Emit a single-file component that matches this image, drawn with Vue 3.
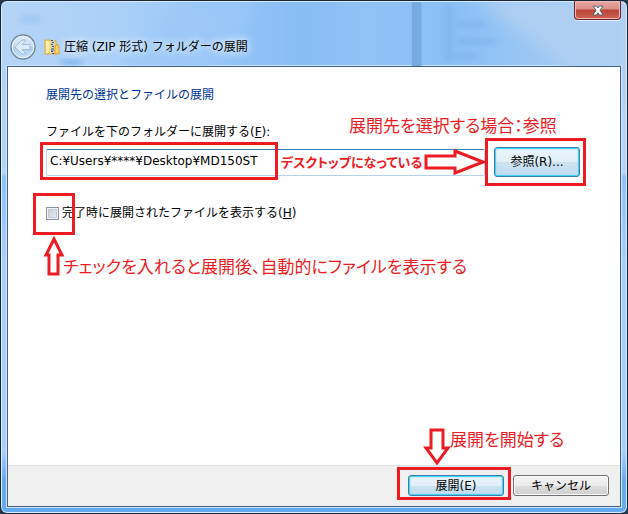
<script setup>
import { ref } from 'vue'

const folder = ref('C:¥Users¥****¥Desktop¥MD150ST')
const showFiles = ref(false)
</script>

<template>
  <div class="window">
    <header class="titlebar">
      <svg class="backdrop" viewBox="0 0 628 66" preserveAspectRatio="none" aria-hidden="true">
        <defs>
          <filter id="soft"><feGaussianBlur stdDeviation="3" /></filter>
          <filter id="softer"><feGaussianBlur stdDeviation="8" /></filter>
        </defs>
        <path d="M110 70L180 0H260L205 70Z" fill="#9dc8f8" opacity=".7" filter="url(#softer)" />
        <path d="M480 -4H640V80H590Z" fill="#afcff2" filter="url(#softer)" />
        <ellipse cx="66" cy="62" rx="12" ry="3" fill="#83b7ec" filter="url(#soft)" />
        <ellipse cx="24" cy="18" rx="12" ry="5" fill="#a2c9f3" filter="url(#soft)" />
        <rect x="414" y="0" width="10" height="66" fill="#75abe1" />
        <g fill="#7db4ea" opacity=".75" filter="url(#soft)">
          <rect x="447" y="2" width="9" height="60" />
          <rect x="460" y="20" width="30" height="6" />
          <rect x="460" y="37" width="40" height="7" />
          <rect x="458" y="53" width="24" height="6" />
        </g>
      </svg>
      <button class="close" type="button" aria-label="閉じる">
        <svg width="12" height="11" viewBox="0 0 12 11">
          <path d="M1 1H4.500L6 3L7.500 1H11L8 5.300L11 10H7.500L6 7.800L4.500 10H1L4 5.300Z" fill="#fff" stroke="#526779" />
        </svg>
      </button>
      <button class="back" type="button" aria-label="戻る">
        <svg width="26" height="26" viewBox="0 0 26 26">
          <defs>
            <linearGradient id="orb" x1="0" y1="0" x2="0" y2="1">
              <stop offset="0" stop-color="#dfecfa" />
              <stop offset=".48" stop-color="#c6dcf2" />
              <stop offset=".5" stop-color="#a9cbec" />
              <stop offset="1" stop-color="#c8e2fb" />
            </linearGradient>
          </defs>
          <circle cx="13" cy="13" r="12" fill="url(#orb)" stroke="#71859b" stroke-width="1.400" />
          <circle cx="13" cy="13" r="10.800" fill="none" stroke="#e8f3fe" />
          <path d="M5 13L12 6H16L12 10.500H20V15.500H12L16 20H12Z" fill="#dcebfa" stroke="#9bb4ce" stroke-width=".8" />
        </svg>
      </button>
      <svg class="zip" width="16" height="16" viewBox="0 0 16 16" aria-hidden="true">
        <path d="M1 1H6L7 2H12V15H1Z" fill="#fbd977" stroke="#e0a94b" />
        <path d="M2 2H5V14H2Z" fill="#ffedaa" />
        <path d="M11 15V8L12 6H14L15 8V15Z" fill="#fbd064" stroke="#d99b38" />
        <path d="M7 1H10V15H7Z" fill="#c9d3d9" />
        <path d="M7 1.500H9M8 3.500H10M7 5.500H9M8 7.500H10M7 12.500H9M8 14.500H10" stroke="#3f5868" />
        <path d="M7 9H10V12H7Z" fill="#7893a3" />
      </svg>
      <h1>圧縮 (ZIP 形式) フォルダーの展開</h1>
    </header>

    <form class="client" @submit.prevent>
      <main>
        <h2>展開先の選択とファイルの展開</h2>
        <label class="caption" for="folder">ファイルを下のフォルダーに展開する(<u>F</u>):</label>
        <div class="picker">
          <input id="folder" v-model="folder" type="text" />
          <button class="btn browse" type="button">参照(R)...</button>
        </div>
        <div class="option">
          <input id="show" v-model="showFiles" type="checkbox" />
          <label for="show">完了時に展開されたファイルを表示する(<u>H</u>)</label>
        </div>
      </main>
      <footer>
        <button class="btn primary" type="submit">展開(E)</button>
        <button class="btn" type="button">キャンセル</button>
      </footer>
    </form>

    <div class="frame frame-path"></div>
    <div class="frame frame-browse"></div>
    <div class="frame frame-check"></div>
    <div class="frame frame-extract"></div>
    <p class="note note-browse">展開先を選択する場合：参照</p>
    <p class="note note-desktop">デスクトップになっている</p>
    <p class="note note-check">チェックを入れると展開後、自動的にファイルを表示する</p>
    <p class="note note-start">展開を開始する</p>
    <svg class="arrow arrow-right" width="62" height="28" viewBox="0 0 62 28" aria-hidden="true">
      <path d="M2 8H31V3L59 14L31 25V20H2Z" />
    </svg>
    <svg class="arrow arrow-up" width="22" height="40" viewBox="0 0 22 40" aria-hidden="true">
      <path d="M11 3L19 19H15V38H6V19H3Z" />
    </svg>
    <svg class="arrow arrow-down" width="28" height="38" viewBox="0 0 28 38" aria-hidden="true">
      <path d="M8 2H20V20H25L14 35L3 20H8Z" />
    </svg>
  </div>
</template>

<style>
body {
  margin: 0;
  background: #26384a;
}
</style>

<style scoped>
.window {
  position: relative;
  box-sizing: border-box;
  min-height: 100vh;
  display: flex;
  flex-direction: column;
  padding: 0 6px 6px;
  border: 1px solid #17263a;
  border-radius: 7px;
  box-shadow: inset 0 0 0 1px #d8ebfd;
  background: linear-gradient(180deg, transparent 0 80px, #b4d6fa 120px 172px, #8fc1f6 176px, #a9cffa 260px 88%, #65a9ee 94%),
    linear-gradient(90deg, #b4d4f7 0, #abd0f8 18%, #9ac7f8 32%, #87bdf4 48%, #90c2f5 58%, #8ac0f6 72%, #9ac6f4 85%, #b1d0f3 100%);
  font: 12px/18px "DejaVu Sans", "Noto Sans CJK JP", sans-serif;
  color: #000;
}
.titlebar {
  position: relative;
  display: flex;
  align-items: center;
  height: 65px;
  padding: 26px 0 0 3px;
  box-sizing: border-box;
}
.backdrop {
  position: absolute;
  inset: 1px 0 0;
  width: 100%;
  height: 64px;
}
.back {
  position: relative;
  width: 26px;
  height: 26px;
  padding: 0;
  border: 0;
  background: none;
}
.back svg,
.close svg {
  display: block;
}
.zip {
  position: relative;
  margin-left: 8px;
}
h1 {
  position: relative;
  margin: 0 0 0 4px;
  font-size: 12px;
  font-weight: 400;
  text-shadow: 0 0 7px #e2f1ff, 0 0 7px #e2f1ff, 0 0 12px #d4eaff;
}
.close {
  position: absolute;
  top: 0;
  right: 0;
  display: flex;
  align-items: center;
  justify-content: center;
  width: 47px;
  height: 19px;
  padding: 0;
  border: 1px solid #6c2228;
  border-top: 0;
  border-radius: 0 0 4px 4px;
  background: linear-gradient(#e8aaa5 0, #dc8e87 45%, #ba4434 50%, #cc6255 100%);
  box-shadow: inset 0 0 0 1px #ecbab5, 0 1px 0 #e2effb;
}
.client {
  flex: 1;
  display: flex;
  flex-direction: column;
  border: 1px solid #41617f;
  background: #fff;
  box-shadow: 0 0 0 1px #cfe5fb;
}
main {
  flex: 1;
  padding: 19px 40px 20px 38px;
}
h2 {
  margin: 0 0 19px;
  font-size: 12px;
  font-weight: 400;
  color: #003399;
}
.caption {
  display: block;
}
.picker {
  display: flex;
  align-items: center;
  gap: 9px;
  margin-top: 6px;
}
.picker input {
  flex: 1;
  min-width: 0;
  height: 27px;
  box-sizing: border-box;
  padding: 0 3px 2px;
  border: 1px solid #b5d3e7;
  border-top-color: #3d7bad;
  border-radius: 2px;
  outline: 0;
  background: #fff;
  font: inherit;
  color: inherit;
}
.btn {
  box-sizing: border-box;
  width: 96px;
  height: 21px;
  padding: 0;
  border: 1px solid #707070;
  border-radius: 3px;
  background: linear-gradient(#f3f3f3 0, #ebebeb 50%, #dddddd 50%, #cfcfcf 100%);
  box-shadow: inset 0 0 0 1px #fafafa;
  font: inherit;
  line-height: 18px;
  color: #000;
}
.primary,
.browse {
  border-color: #3c7fb1;
  background: linear-gradient(#edf5fa 0, #e0eff8 50%, #cde3f1 50%, #c0dcee 100%);
  box-shadow: inset 0 0 0 1px #48d0f5, inset 0 0 2px 1px #8ee0f8;
}
.browse {
  width: 86px;
  height: 30px;
}
.option {
  display: flex;
  align-items: center;
  gap: 3px;
  margin-top: 27px;
}
.option input {
  appearance: none;
  box-sizing: border-box;
  width: 13px;
  height: 13px;
  margin: 0;
  border: 1px solid #8696a6;
  background: linear-gradient(135deg, #bec6ce, #f4f5f6);
  box-shadow: inset 0 0 0 1px #f4f4f4, inset 0 0 0 2px #c3cad1;
}
.option input:checked {
  background: #2c6aa5;
}
footer {
  display: flex;
  justify-content: flex-end;
  gap: 9px;
  padding: 9px 11px 10px;
  border-top: 1px solid #dfdfdf;
  background: #f0f0f0;
}
.frame {
  position: absolute;
  box-sizing: border-box;
  border: 3px solid #ed1c24;
  pointer-events: none;
}
.frame-path {
  left: 39px;
  top: 141px;
  width: 238px;
  height: 38px;
}
.frame-browse {
  left: 484px;
  top: 137px;
  width: 101px;
  height: 48px;
}
.frame-check {
  left: 32px;
  top: 192px;
  width: 42px;
  height: 42px;
}
.frame-extract {
  left: 396px;
  top: 466px;
  width: 114px;
  height: 33px;
}
.note {
  position: absolute;
  margin: 0;
  font-family: "Noto Sans CJK JP", sans-serif;
  font-size: 17px;
  line-height: 24px;
  font-feature-settings: "palt";
  white-space: nowrap;
  color: #ed1c24;
  pointer-events: none;
}
.note-browse {
  left: 348px;
  top: 112px;
}
.note-desktop {
  left: 280px;
  top: 149px;
  font-size: 13px;
  font-weight: 700;
}
.note-check {
  left: 62px;
  top: 253px;
}
.note-start {
  left: 449px;
  top: 426px;
}
.arrow {
  position: absolute;
  fill: #fff;
  stroke: #ed1c24;
  stroke-width: 3;
  pointer-events: none;
}
.arrow-right {
  left: 423px;
  top: 147px;
}
.arrow-up {
  left: 42px;
  top: 235px;
}
.arrow-down {
  left: 422px;
  top: 427px;
}
</style>
